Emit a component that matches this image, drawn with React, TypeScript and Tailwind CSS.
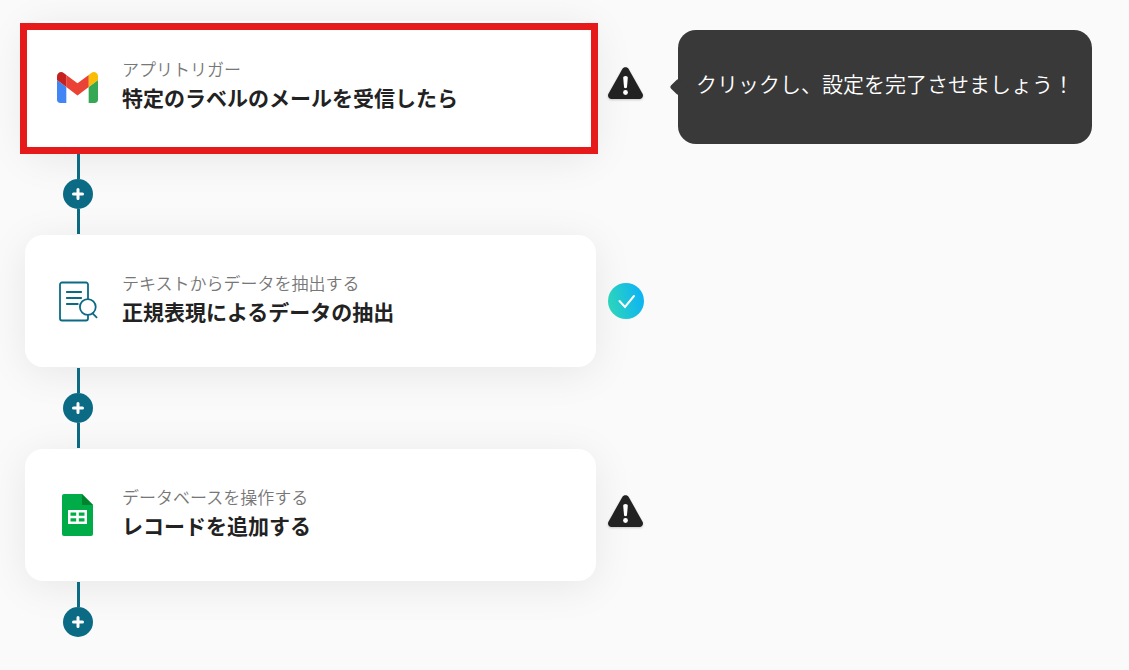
import React from 'react';

type Step = {
  id: string;
  category: string;
  title: string;
  icon: React.ReactNode;
  done?: boolean;
  highlighted?: boolean;
  tooltip?: string;
};

const steps: Step[] = [
  {
    id: 'trigger',
    category: 'アプリトリガー',
    title: '特定のラベルのメールを受信したら',
    icon: <GmailIcon />,
    highlighted: true,
    tooltip: 'クリックし、設定を完了させましょう！',
  },
  {
    id: 'extract',
    category: 'テキストからデータを抽出する',
    title: '正規表現によるデータの抽出',
    icon: <ExtractIcon />,
    done: true,
  },
  {
    id: 'record',
    category: 'データベースを操作する',
    title: 'レコードを追加する',
    icon: <SheetsIcon />,
  },
];

export default function App() {
  return (
    <main className="min-h-screen overflow-x-hidden bg-[#fafafa] pt-[21px] pl-[25px] pr-6 font-['Noto_Sans_CJK_JP',sans-serif]">
      {steps.map((step, i) => (
        <React.Fragment key={step.id}>
          <StepRow step={step} />
          <Connector last={i === steps.length - 1} />
        </React.Fragment>
      ))}
    </main>
  );
}

function StepRow({ step }: { step: Step }) {
  return (
    <div className="flex items-center">
      <button
        type="button"
        className="relative flex h-[132px] w-full max-w-[571px] items-center gap-6 rounded-[18px] bg-white pl-8 text-left shadow-[0_6px_40px_rgba(0,0,0,0.08)]"
      >
        <span className="flex w-[41px] shrink-0 justify-center">{step.icon}</span>
        <span className="flex flex-col pb-2">
          <span className="text-[17px] leading-7 font-[350] text-[#777777]">{step.category}</span>
          <span className="text-[21px] leading-7 font-bold text-[#222222]">{step.title}</span>
        </span>
        {step.highlighted && (
          <span className="absolute top-[2px] -right-[2px] -bottom-px -left-[5px] border-[7px] border-[#e71a1b]" />
        )}
      </button>

      <span className="relative ml-3 shrink-0">{step.done ? <DoneIcon /> : <WarningIcon />}</span>

      {step.tooltip && (
        <div role="tooltip" className="relative ml-[34px] flex h-[114px] items-center rounded-[18px] bg-[#393939] px-[18px]">
          <span className="absolute top-1/2 -left-[6px] size-3 -translate-y-1/2 rotate-45 rounded-[2px] bg-[#393939]" />
          <p className="relative pb-2 text-[21px] leading-7 font-[350] whitespace-nowrap text-white">{step.tooltip}</p>
        </div>
      )}
    </div>
  );
}

function Connector({ last }: { last: boolean }) {
  return (
    <div className="relative ml-[38px] flex w-[30px] flex-col items-center py-px">
      <div className="h-[25px] w-[3px] bg-[#0b6b85]" />
      <button
        type="button"
        aria-label="ステップを追加"
        className="flex size-[30px] items-center justify-center rounded-full bg-[#0b6b85]"
      >
        <svg width="14" height="14" viewBox="0 0 14 14" fill="none" stroke="#fff" strokeWidth="3" strokeLinecap="round">
          <path d="M7 2.5v9M2.5 7h9" />
        </svg>
      </button>
      {!last && <div className="h-[25px] w-[3px] bg-[#0b6b85]" />}
    </div>
  );
}

function WarningIcon() {
  return (
    <svg width="36" height="44" viewBox="0 0 36 44" className="drop-shadow-[0_1px_1px_rgba(0,0,0,0.2)]">
      <path
        d="M14.2 4.2c1.5-2.6 5.1-2.6 6.6 0l13.6 24.2c1.5 2.7 0 5.6-3 5.6H3.6c-3 0-4.5-2.9-3-5.6z"
        fill="#222222"
      />
      <path d="M15.2 12.8c0-1.1.9-1.8 2.3-1.8s2.3.7 2.3 1.8l-.8 9.3c-.1.8-.7 1.2-1.5 1.2s-1.4-.4-1.5-1.2z" fill="#fff" />
      <circle cx="17.5" cy="27.5" r="2.4" fill="#fff" />
    </svg>
  );
}

function DoneIcon() {
  return (
    <svg width="36" height="36" viewBox="0 0 36 36" fill="none">
      <defs>
        <linearGradient id="done-fill" x1="2" y1="22" x2="34" y2="14" gradientUnits="userSpaceOnUse">
          <stop stopColor="#2bd4bd" />
          <stop offset="1" stopColor="#0fb4f2" />
        </linearGradient>
      </defs>
      <circle cx="18" cy="18" r="18" fill="url(#done-fill)" />
      <path d="M11.5 18l5.5 6 9-11" stroke="#fff" strokeWidth="2" strokeLinecap="round" />
    </svg>
  );
}

function GmailIcon() {
  return (
    <svg width="41" height="31" viewBox="52 42 88 66">
      <path fill="#4285f4" d="M58 108h14V74L52 59v43c0 3.32 2.69 6 6 6" />
      <path fill="#34a853" d="M120 108h14c3.32 0 6-2.69 6-6V59l-20 15" />
      <path fill="#fbbc04" d="M120 48v26l20-15v-8c0-7.42-8.47-11.65-14.4-7.2" />
      <path fill="#ea4335" d="M72 74V48l24 18 24-18v26L96 92" />
      <path fill="#c5221f" d="M52 51v8l20 15V48l-5.6-4.2c-5.94-4.45-14.4-.22-14.4 7.2" />
    </svg>
  );
}

function ExtractIcon() {
  return (
    <svg width="41" height="41" viewBox="0 0 41 41" fill="none" stroke="#0b6b85" strokeWidth="1.8" strokeLinecap="round">
      <path d="M31 17.5V3.5a2 2 0 0 0-2-2H5a2 2 0 0 0-2 2v34a2 2 0 0 0 2 2h24a2 2 0 0 0 2-2v-3" />
      <path d="M9.8 11h14.4M9.8 17h14.4M9.8 23h11" />
      <circle cx="30.8" cy="26" r="7.9" />
      <path d="M35.6 32.4l4 4" />
    </svg>
  );
}

function SheetsIcon() {
  return (
    <svg width="31" height="42" viewBox="0 0 31 42">
      <path fill="#00ac47" d="M2 0h18l11 11v29a2 2 0 0 1-2 2H2a2 2 0 0 1-2-2V2a2 2 0 0 1 2-2z" />
      <path fill="#00832d" d="M20 0l11 11H20z" />
      <path
        fill="#fff"
        fillRule="evenodd"
        d="M6 16h19v14H6zM8.5 18.5v3.2h5.7v-3.2zM16.8 18.5v3.2h5.7v-3.2zM8.5 24.3v3.2h5.7v-3.2zM16.8 24.3v3.2h5.7v-3.2z"
      />
    </svg>
  );
}
